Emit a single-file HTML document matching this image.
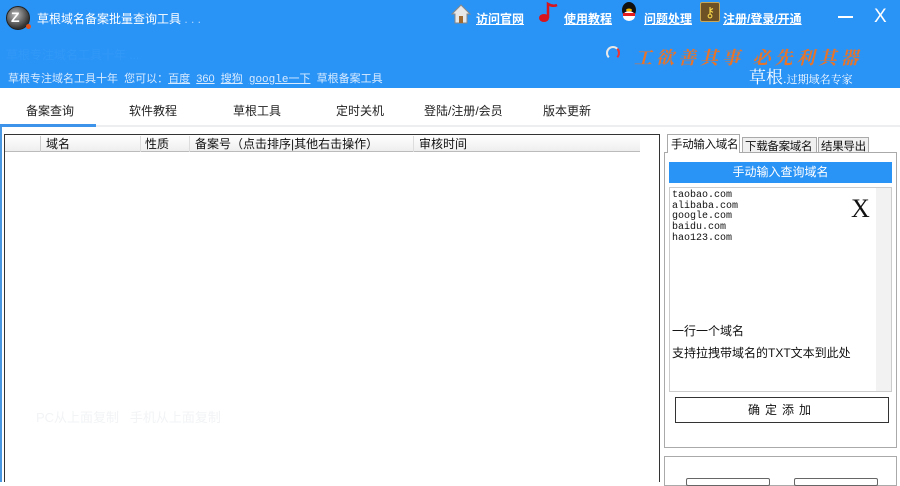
<!DOCTYPE html>
<html><head><meta charset="utf-8"><style>
*{margin:0;padding:0;box-sizing:border-box}
body{width:900px;height:482px;overflow:hidden;background:#fff;font-family:"Liberation Sans","Noto Sans CJK SC",sans-serif;font-size:12px;color:#111;position:relative}
.a{position:absolute;white-space:nowrap}
#hdr{left:0;top:0;width:900px;height:88px;background:#2a93f6}
.w{color:#fff}
.lk{color:#fff;font-weight:bold;text-decoration:underline;font-size:12px}
.tab{top:102px;font-size:12px;color:#222}
.faint{color:#f1f3f5}
</style></head><body>
<div id="hdr" class="a"></div>
<div class="a" style="left:6px;top:6px;width:24px;height:24px;border-radius:50%;background:radial-gradient(circle at 40% 35%,#bbb,#333 70%);border:1px solid #222"></div>
<div class="a" style="left:11px;top:9px;font-weight:bold;color:#fff;font-size:14px">Z</div>
<div class="a" style="left:26px;top:24px;width:5px;height:5px;border-radius:50%;background:#e5531c"></div>
<div class="a w" style="left:37px;top:10px;font-size:12px">草根域名备案批量查询工具 <span style="opacity:.6">. . .</span></div>
<div class="a" style="left:6px;top:46px;color:#3199f6;font-size:12px">草根专注域名工具十年 ...</div>
<div class="a w" style="left:8px;top:70px;font-size:11px;color:#d8ebff">草根专注域名工具十年 &nbsp;您可以：<u>百度</u> &nbsp;<u>360</u> &nbsp;<u>搜狗</u> &nbsp;<u style="font-family:'Liberation Mono',monospace">google一下</u> &nbsp;草根备案工具</div>
<svg class="a" style="left:450px;top:2px" width="22" height="22"><path d="M2 12 L11 3 L20 12 L17 12 L17 21 L5 21 L5 12Z" fill="#e8e8e8" stroke="#888"/><rect x="9" y="14" width="4" height="7" fill="#a06a30"/></svg>
<div class="a lk" style="left:476px;top:10px">访问官网</div>
<svg class="a" style="left:537px;top:1px" width="22" height="22"><ellipse cx="7" cy="17" rx="5" ry="4" fill="#d8141c"/><path d="M11 17 L11 3 Q16 6 20 4" stroke="#d8141c" stroke-width="2.5" fill="none"/></svg>
<div class="a lk" style="left:564px;top:10px">使用教程</div>
<svg class="a" style="left:619px;top:1px" width="20" height="22"><ellipse cx="10" cy="9" rx="7" ry="8" fill="#111"/><ellipse cx="10" cy="15" rx="6" ry="5" fill="#fff"/><rect x="4" y="12" width="12" height="3" fill="#e51c1c"/><ellipse cx="10" cy="9" rx="3" ry="1.5" fill="#f5b800"/></svg>
<div class="a lk" style="left:644px;top:10px">问题处理</div>
<div class="a" style="left:700px;top:2px;width:20px;height:20px;background:#6e5226;border:1px solid #c9a654;border-radius:2px;color:#f6d54a;font-size:14px;text-align:center;line-height:18px">⚷</div>
<div class="a lk" style="left:723px;top:10px">注册/登录/开通</div>
<div class="a" style="left:838px;top:16px;width:15px;height:2px;background:#fff"></div>
<div class="a w" style="left:874px;top:6px;font-size:19px">X</div>
<div class="a" style="left:606px;top:46px;width:14px;height:14px;border-radius:50%;border:2px solid #e8e8e8;border-right-color:#e33;border-bottom-color:transparent"></div>
<div class="a" style="left:634px;top:44px;color:#e8742a;font-size:18px;font-weight:bold;font-style:italic;letter-spacing:4px;font-family:'Noto Serif CJK SC',serif">工欲善其事 必先利其器</div>
<div class="a w" style="left:749px;top:63px;font-size:17px;font-family:'Noto Serif CJK SC',serif">草根<span style="font-size:11px">.过期域名专家</span></div>
<div class="a tab" style="left:26px">备案查询</div>
<div class="a tab" style="left:129px">软件教程</div>
<div class="a tab" style="left:233px">草根工具</div>
<div class="a tab" style="left:336px">定时关机</div>
<div class="a tab" style="left:424px">登陆/注册/会员</div>
<div class="a tab" style="left:543px">版本更新</div>
<div class="a" style="left:0;top:124px;width:96px;height:3px;background:#3d93e9"></div>
<div class="a" style="left:96px;top:125px;width:804px;height:2px;background:#eceef0"></div>
<div class="a" style="left:0;top:127px;width:2px;height:355px;background:#4a98e2"></div>
<div class="a" style="left:4px;top:134px;width:656px;height:348px;border:1px solid #333;border-bottom:none;background:#fff"></div>
<div class="a" style="left:5px;top:135px;width:635px;height:17px;background:linear-gradient(#fff,#eee);border-bottom:1px solid #bbb"></div>
<div class="a" style="left:40px;top:136px;width:1px;height:16px;background:#ccc"></div>
<div class="a" style="left:140px;top:136px;width:1px;height:16px;background:#ddd"></div>
<div class="a" style="left:189px;top:136px;width:1px;height:16px;background:#ddd"></div>
<div class="a" style="left:413px;top:136px;width:1px;height:16px;background:#ddd"></div>
<div class="a" style="left:46px;top:136px;line-height:16px">域名</div>
<div class="a" style="left:145px;top:136px;line-height:16px">性质</div>
<div class="a" style="left:195px;top:136px;line-height:16px">备案号（点击排序|其他右击操作）</div>
<div class="a" style="left:419px;top:136px;line-height:16px">审核时间</div>
<div class="a faint" style="left:36px;top:407px;font-size:13px">PC从上面复制 &nbsp; 手机从上面复制</div>
<div class="a" style="left:664px;top:152px;width:233px;height:296px;border:1px solid #aaa"></div>
<div class="a" style="left:667px;top:134px;width:73px;height:19px;border:1px solid #aaa;border-bottom:none;background:#fff;padding:1px 0 0 3px;font-size:11.5px;letter-spacing:-.3px">手动输入域名</div>
<div class="a" style="left:742px;top:137px;width:75px;height:16px;border:1px solid #aaa;background:#f0f0f0;padding:0 0 0 2px;font-size:11.5px;letter-spacing:-.3px;overflow:hidden">下载备案域名</div>
<div class="a" style="left:818px;top:137px;width:51px;height:16px;border:1px solid #aaa;background:#f0f0f0;padding:0 0 0 2px;font-size:11.5px;letter-spacing:-.3px;overflow:hidden">结果导出</div>
<div class="a" style="left:669px;top:162px;width:223px;height:21px;background:#2a93f6;color:#fff;text-align:center;line-height:21px">手动输入查询域名</div>
<div class="a" style="left:669px;top:187px;width:223px;height:205px;border:1px solid #ccc;background:#fff"></div>
<div class="a" style="left:876px;top:188px;width:15px;height:203px;background:#f2f2f2"></div>
<div class="a" style="left:672px;top:191px;font-family:'Liberation Mono',monospace;font-size:10px;line-height:10.7px">taobao.com<br>alibaba.com<br>google.com<br>baidu.com<br>hao123.com</div>
<div class="a" style="left:851px;top:194px;font-family:'Liberation Serif',serif;font-size:26px">X</div>
<div class="a" style="left:672px;top:322px">一行一个域名</div>
<div class="a" style="left:672px;top:344px">支持拉拽带域名的TXT文本到此处</div>
<div class="a" style="left:675px;top:397px;width:214px;height:26px;border:1px solid #333;text-align:center;line-height:24px;letter-spacing:5px">确定添加</div>
<div class="a" style="left:664px;top:456px;width:233px;height:30px;border:1px solid #aaa"></div>
<div class="a" style="left:686px;top:478px;width:84px;height:8px;border:1px solid #666;border-radius:2px"></div>
<div class="a" style="left:794px;top:478px;width:84px;height:8px;border:1px solid #666;border-radius:2px"></div>
</body></html>
